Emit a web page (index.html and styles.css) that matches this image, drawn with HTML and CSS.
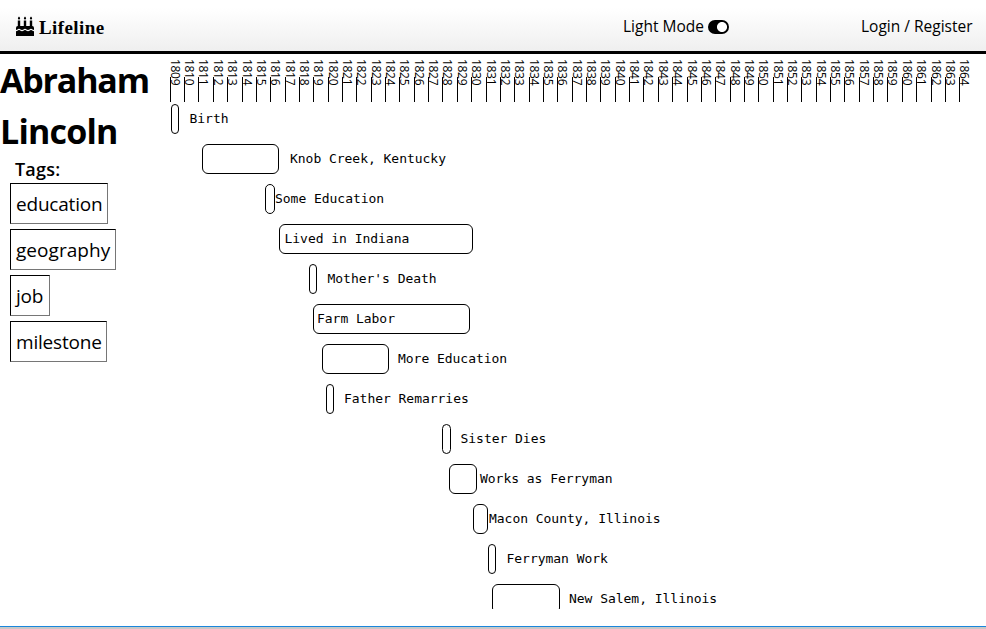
FILE: index.html
```html
<!DOCTYPE html>
<html lang="en">
<head>
<meta charset="utf-8">
<title>Lifeline</title>
<link rel="stylesheet" href="styles.css">
</head>
<body>
<header class="topbar">
  <a class="brand">
    <svg class="cake" viewBox="0 0 18 20" aria-hidden="true">
      <path d="M3 0.5c1.500 1.500 1.500 3 0 3s-1.500-1.500 0-3zM9 .5c1.500 1.500 1.500 3 0 3s-1.500-1.500 0-3zM15 .5c1.500 1.500 1.500 3 0 3s-1.500-1.500 0-3z"/>
      <path d="M1.800 4.500h2.400V10h3.600V4.500h2.400V10h3.600V4.500h2.400V10q1.800 0 1.800 2v2c-1.500 0-1.500-1.300-3-1.300S13.500 14 12 14s-1.500-1.300-3-1.300S7.500 14 6 14s-1.500-1.300-3-1.300S1.500 14 0 14v-2q0-2 1.800-2z"/>
      <path d="M0 15.300c1.500 0 1.500-1.300 3-1.300s1.500 1.300 3 1.300S7.500 14 9 14s1.500 1.300 3 1.300 1.500-1.300 3-1.300 1.500 1.300 3 1.300V20H0z"/>
    </svg>
    <span>Lifeline</span>
  </a>
  <div class="mode"><span class="mode-text">Light Mode</span><span class="toggle"></span></div>
  <a class="login">Login / Register</a>
</header>
<main class="layout">
  <aside class="sidebar">
    <h1 class="person"><span class="first">Abraham</span> <span class="last">Lincoln</span></h1>
    <h2 class="tags-title">Tags:</h2>
    <div class="tags">
      <span class="tag education">education</span>
      <span class="tag geography">geography</span>
      <span class="tag job">job</span>
      <span class="tag milestone">milestone</span>
    </div>
  </aside>
  <section class="chart">
    <div class="years" id="years"></div>
    <div class="events" id="events"></div>
  </section>
</main>
<footer class="edge"></footer>
<script src="timeline.js"></script>
</body>
</html>
```
FILE: styles.css
```css
* { box-sizing: border-box; }
body {
  margin: 0;
  height: 629px;
  overflow: hidden;
  display: flex;
  flex-direction: column;
  background: #fff;
  color: #000;
  font-family: "Open Sans", "Noto Sans", sans-serif;
}
.topbar {
  flex: none;
  height: 54px;
  display: flex;
  align-items: center;
  padding: 0 13px 0 16px;
  border-bottom: 3px solid #000;
  background: linear-gradient(#fff 15%, #efefef);
  font-size: 15.5px;
  line-height: 24px;
}
.brand {
  display: flex;
  align-items: center;
  gap: 5px;
  flex: none;
  width: 607px;
  padding-top: 4px;
  font: bold 19px/24px "Liberation Serif", serif;
  letter-spacing: 0.4px;
}
.cake { width: 18px; height: 20px; margin-top: -3px; }
.mode { display: flex; align-items: center; flex: none; width: 238px; }
.mode-text { width: 85px; white-space: nowrap; }
.toggle {
  width: 21px;
  height: 14px;
  margin-top: 3px;
  border-radius: 7px;
  background: radial-gradient(circle at 14px 7px, #fff 4.6px, #000 5.4px);
}
.login { white-space: nowrap; }
.layout { flex: none; height: 555px; display: flex; }
.sidebar { width: 170px; flex: none; }
.person {
  margin: 1px 0 0;
  font-size: 34px;
  font-weight: 700;
  line-height: 51px;
  letter-spacing: -1.2px;
}
.person span { display: block; }
.person .last { letter-spacing: -0.8px; }
.tags-title {
  margin: -1px 0 0 15px;
  font-size: 18px;
  font-weight: 600;
  line-height: 27px;
  letter-spacing: 0.2px;
}
.tags {
  display: flex;
  flex-direction: column;
  align-items: flex-start;
  gap: 5px;
  padding-left: 10px;
}
.tag {
  height: 41px;
  padding: 1px 0 0 5px;
  border: 1px solid;
  border-color: #000 #767676 #767676 #000;
  font-size: 19px;
  line-height: 39px;
  letter-spacing: -0.2px;
  white-space: nowrap;
}
.education { width: 98px; }
.geography { width: 106px; letter-spacing: 0.05px; }
.job { width: 40px; }
.milestone { width: 97px; }
.chart { width: 804px; flex: none; }
.years { display: flex; height: 50px; padding-top: 5px; }
.year { height: 43px; flex: none; display: flex; align-items: flex-end; }
.tick {
  height: 25px;
  border-left: 1px solid #000;
}
.year-text {
  align-self: flex-start;
  width: 10px;
  height: 28px;
  margin-left: -1px;
  writing-mode: vertical-rl;
  font-size: 12px;
  line-height: 10px;
  letter-spacing: -0.3px;
  white-space: nowrap;
}
.events { height: 505px; overflow: hidden; }
.event { height: 30px; margin-bottom: 10px; display: flex; align-items: center; }
.bar {
  flex: none;
  height: 30px;
  border: 1px solid #000;
  border-radius: 6px;
}
.label {
  font: 13px/30px "DejaVu Sans Mono", monospace;
  letter-spacing: -0.03px;
  white-space: nowrap;
}
.edge { flex: none; height: 20px; margin-top: 17px; border-top: 1px solid #1a86dc; background: #c8c8c8; }
```
FILE: timeline.js
```js
const START_X = 170;
const FIRST_YEAR = 1809;
const YEAR_WIDTH = 14.354;
// Left edge of a year, snapped to a whole pixel.
const yearX = (y) => Math.round(START_X - 0.24 + (y - FIRST_YEAR) * YEAR_WIDTH);

const years = document.getElementById("years");
for (let y = FIRST_YEAR; y <= 1864; y++) {
  years.insertAdjacentHTML("beforeend",
    `<div class="year" style="width:${yearX(y + 1) - yearX(y)}px"><i class="tick"></i><span class="year-text">${y}</span></div>`);
}

// name, bar start, bar width, label start
const data = [
  ["Birth", 171, 8, 189.500],
  ["Knob Creek, Kentucky", 202, 77, 290],
  ["Some Education", 265, 10, 275],
  ["Lived in Indiana", 279, 194, 284.500],
  ["Mother's Death", 309, 8, 327.500],
  ["Farm Labor", 313, 157, 317],
  ["More Education", 322, 67, 398],
  ["Father Remarries", 326, 8, 344],
  ["Sister Dies", 442, 9, 460.500],
  ["Works as Ferryman", 449, 28, 480],
  ["Macon County, Illinois", 473, 15, 489],
  ["Ferryman Work", 488, 8, 506.500],
  ["New Salem, Illinois", 492, 68, 569]
];
const events = document.getElementById("events");
for (const [name, x, w, labelX] of data) {
  events.insertAdjacentHTML("beforeend",
    `<div class="event"><div class="bar" style="margin-left:${x - START_X}px;width:${w}px"></div>` +
    `<span class="label" style="margin-left:${labelX - x - w}px">${name}</span></div>`);
}
```
